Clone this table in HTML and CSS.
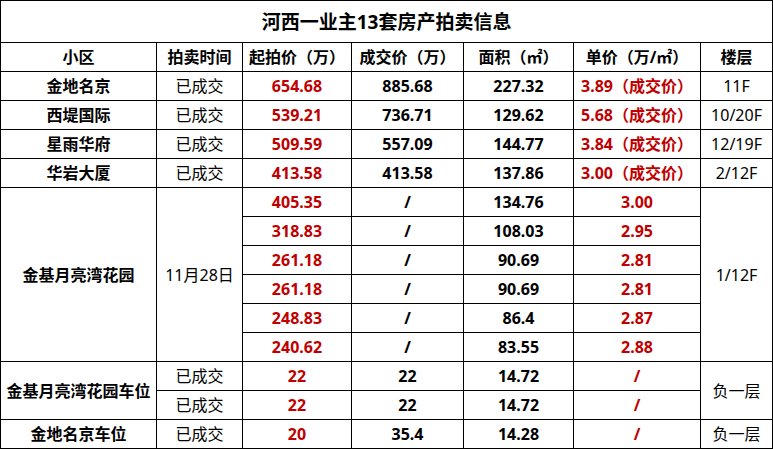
FILE: index.html
```html
<!DOCTYPE html>
<html lang="zh-CN">
<head>
<meta charset="utf-8">
<title>河西一业主13套房产拍卖信息</title>
<link rel="stylesheet" href="styles.css">
</head>
<body>
<table class="sheet">
  <colgroup>
    <col class="c1"><col class="c2"><col class="c3"><col class="c4"><col class="c5"><col class="c6"><col class="c7">
  </colgroup>
  <tr class="title-row"><td colspan="7" class="title">河西一业主13套房产拍卖信息</td></tr>
  <tr class="row head">
    <td>小区</td><td>拍卖时间</td><td>起拍价（万）</td><td>成交价（万）</td><td>面积（㎡）</td><td>单价（万/㎡）</td><td>楼层</td>
  </tr>
  <tr class="row">
    <td class="b">金地名京</td><td class="n">已成交</td><td class="r">654.68</td><td class="b">885.68</td><td class="b">227.32</td><td class="r">3.89（成交价）</td><td class="n">11F</td>
  </tr>
  <tr class="row">
    <td class="b">西堤国际</td><td class="n">已成交</td><td class="r">539.21</td><td class="b">736.71</td><td class="b">129.62</td><td class="r">5.68（成交价）</td><td class="n">10/20F</td>
  </tr>
  <tr class="row">
    <td class="b">星雨华府</td><td class="n">已成交</td><td class="r">509.59</td><td class="b">557.09</td><td class="b">144.77</td><td class="r">3.84（成交价）</td><td class="n">12/19F</td>
  </tr>
  <tr class="row">
    <td class="b">华岩大厦</td><td class="n">已成交</td><td class="r">413.58</td><td class="b">413.58</td><td class="b">137.86</td><td class="r">3.00（成交价）</td><td class="n">2/12F</td>
  </tr>
  <tr class="row">
    <td class="b" rowspan="6">金基月亮湾花园</td><td class="n" rowspan="6">11月28日</td><td class="r">405.35</td><td class="b">/</td><td class="b">134.76</td><td class="r">3.00</td><td class="n" rowspan="6">1/12F</td>
  </tr>
  <tr class="row"><td class="r">318.83</td><td class="b">/</td><td class="b">108.03</td><td class="r">2.95</td></tr>
  <tr class="row"><td class="r">261.18</td><td class="b">/</td><td class="b">90.69</td><td class="r">2.81</td></tr>
  <tr class="row"><td class="r">261.18</td><td class="b">/</td><td class="b">90.69</td><td class="r">2.81</td></tr>
  <tr class="row"><td class="r">248.83</td><td class="b">/</td><td class="b">86.4</td><td class="r">2.87</td></tr>
  <tr class="row"><td class="r">240.62</td><td class="b">/</td><td class="b">83.55</td><td class="r">2.88</td></tr>
  <tr class="row">
    <td class="b" rowspan="2">金基月亮湾花园车位</td><td class="n">已成交</td><td class="r">22</td><td class="b">22</td><td class="b">14.72</td><td class="r">/</td><td class="n" rowspan="2">负一层</td>
  </tr>
  <tr class="row">
    <td class="n">已成交</td><td class="r">22</td><td class="b">22</td><td class="b">14.72</td><td class="r">/</td>
  </tr>
  <tr class="row">
    <td class="b">金地名京车位</td><td class="n">已成交</td><td class="r">20</td><td class="b">35.4</td><td class="b">14.28</td><td class="r">/</td><td class="n">负一层</td>
  </tr>
</table>
</body>
</html>
```

FILE: styles.css
```css
html, body {
  margin: 0;
  padding: 0;
  background: #ffffff;
}

body {
  font-family: "Noto Sans", "Noto Sans CJK SC", sans-serif;
  color: #000000;
}

.sheet {
  border-collapse: collapse;
  table-layout: fixed;
  width: 772px;
}

.c1 { width: 156px; }
.c2 { width: 86px; }
.c3 { width: 109px; }
.c4 { width: 112px; }
.c5 { width: 110px; }
.c6 { width: 127px; }
.c7 { width: 72px; }

.sheet td {
  border: 1px solid #000000;
  padding: 0;
  text-align: center;
  vertical-align: middle;
  font-size: 16px;
  line-height: 20px;
  white-space: nowrap;
  overflow: hidden;
}

.title-row {
  height: 42px;
}

.row {
  height: 29px;
}

.sheet td.title {
  font-size: 19px;
  font-weight: 700;
}

.head td {
  font-weight: 700;
}

.sheet td.b {
  font-weight: 700;
}

.sheet td.n {
  font-weight: 400;
}

.sheet td.r {
  font-weight: 700;
  color: #c00000;
}
```
